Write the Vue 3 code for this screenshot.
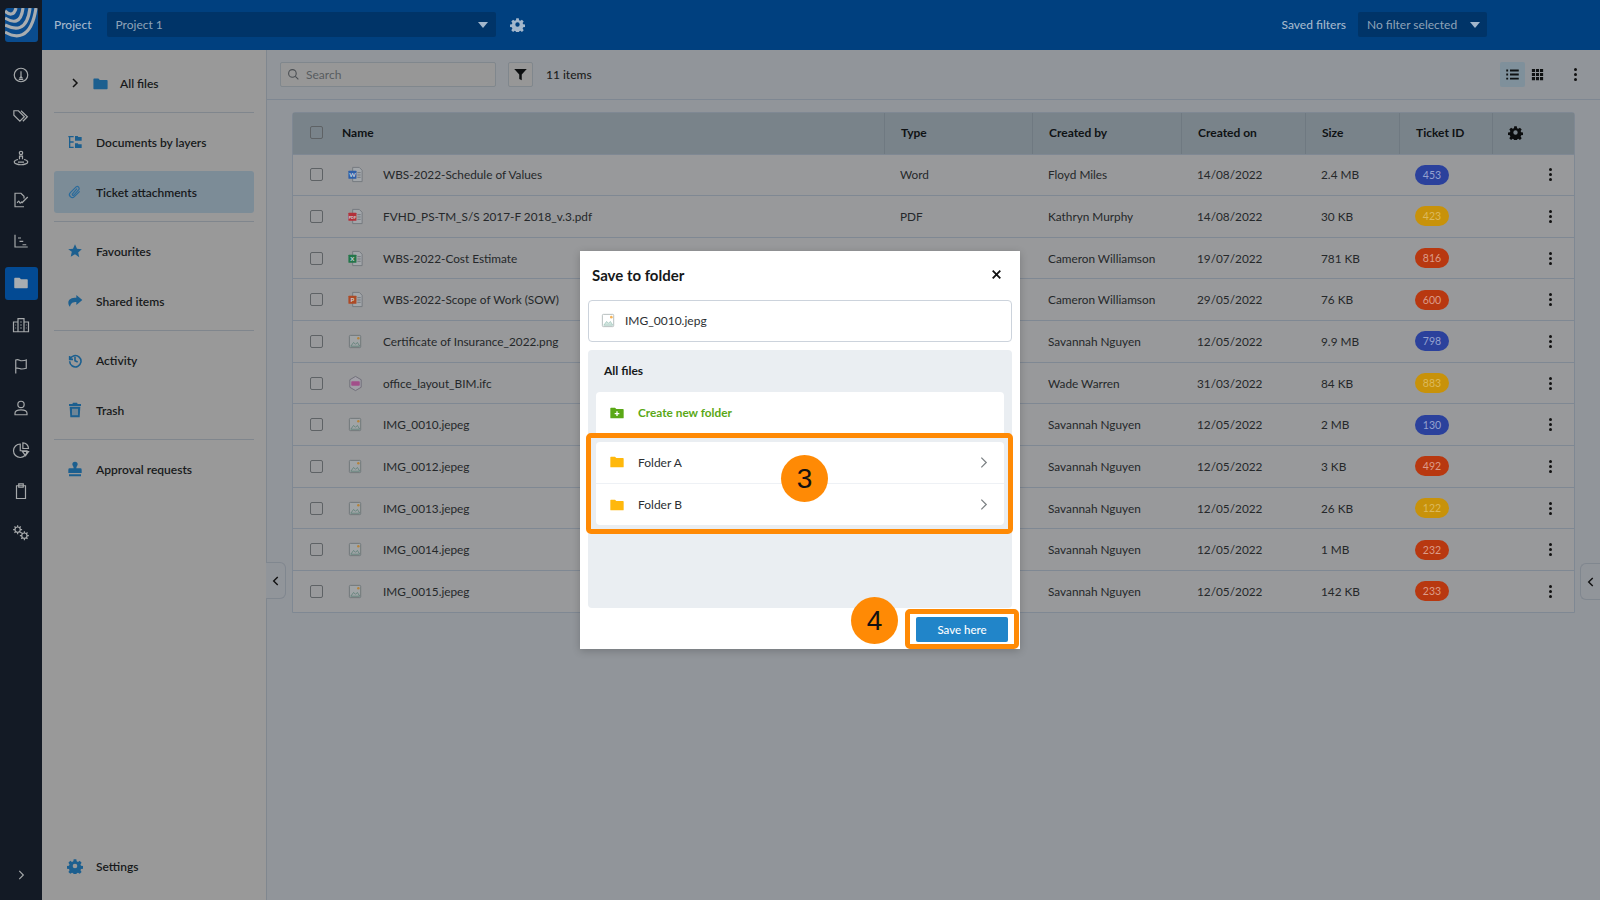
<script setup>
const railIcons = [
  { d: 'M12 3a9 9 0 100 18 9 9 0 000-18zM12 7v7M7.500 10h.01M16.500 10h.01M9 18h6M12 14l-1.500 2h3z' },
  { d: 'M2.500 5v6l8 8 6-6-8-8zM6.500 8.500h.01M12 5l8.500 8-6 6' },
  { d: 'M12 3a2.200 2.200 0 110 4.400A2.200 2.200 0 0112 3zM10 13.500V9.500h4v4M8 14c-3 .7-5 2-5 3.200 0 2 4 3.800 9 3.800s9-1.800 9-3.800c0-1.200-2-2.500-5-3.200M8 17.500h8' },
  { d: 'M16 21H4V3h8l4 4v3M7 16c1-3 2-3 3-1s2 1 3-1M13 16l8-8' },
  { d: 'M4 3.500V20h17M8 8h4M10 12.500h5M14 17h5' },
  { d: 'M3 6a1 1 0 011-1h6l2 2h8a1 1 0 011 1v10a1 1 0 01-1 1H4a1 1 0 01-1-1z', fill: true },
  { d: 'M2 8h6v13H2zM8 3.500h8V21H8zM16 8h6v13h-6zM4.500 12h1M4.500 16h1M11 8h2M11 12h2M11 16h2M18.500 12h1M18.500 16h1' },
  { d: 'M5 22V4c4-1.500 5 1 8 1 2 0 4 0 6-1v11c-3 1-4 1-6 1-3 0-4-2-8-1' },
  { d: 'M12 3a4.200 4.200 0 110 8.400A4.200 4.200 0 0112 3zM4 21v-2c0-3 3-4.500 8-4.500s8 1.500 8 4.500v2z' },
  { d: 'M11 4a9 9 0 109 9h-9zM14.500 2.500V10H22a7.500 7.500 0 00-7.500-7.500zM14 14h8l-4 5.500z' },
  { d: 'M6 5h12v17H6zM9 2.500h6V7H9z' },
  { d: 'M7.500 4a3.500 3.500 0 110 7 3.500 3.500 0 010-7zM7.500 1.500V4M7.500 11v2.500M1.500 7.500H4M11 7.500h2.500M3.300 3.300L5 5M10 10l1.700 1.700M11.700 3.300L10 5M5 10l-1.700 1.700M16.500 12a3.500 3.500 0 110 7 3.500 3.500 0 010-7zM16.500 9.500V12M16.500 19v2.500M10.500 15.500H13M20 15.500h2.500M12.300 11.300L14 13M19 18l1.700 1.700M20.700 11.300L19 13M14 18l-1.700 1.700' },
]

const rows = [
  ['WBS-2022-Schedule of Values', 'Word', 'Floyd Miles', '14/08/2022', '2.4 MB', 453, 'blue', 'word'],
  ['FVHD_PS-TM_S/S 2017-F 2018_v.3.pdf', 'PDF', 'Kathryn Murphy', '14/08/2022', '30 KB', 423, 'yellow', 'pdf'],
  ['WBS-2022-Cost Estimate', 'Excel', 'Cameron Williamson', '19/07/2022', '781 KB', 816, 'red', 'xls'],
  ['WBS-2022-Scope of Work (SOW)', 'PowerPoint', 'Cameron Williamson', '29/05/2022', '76 KB', 600, 'red', 'ppt'],
  ['Certificate of Insurance_2022.png', 'Image', 'Savannah Nguyen', '12/05/2022', '9.9 MB', 798, 'blue', 'img'],
  ['office_layout_BIM.ifc', 'BIM', 'Wade Warren', '31/03/2022', '84 KB', 883, 'yellow', 'bim'],
  ['IMG_0010.jepeg', 'Image', 'Savannah Nguyen', '12/05/2022', '2 MB', 130, 'blue', 'img'],
  ['IMG_0012.jepeg', 'Image', 'Savannah Nguyen', '12/05/2022', '3 KB', 492, 'red', 'img'],
  ['IMG_0013.jepeg', 'Image', 'Savannah Nguyen', '12/05/2022', '26 KB', 122, 'yellow', 'img'],
  ['IMG_0014.jepeg', 'Image', 'Savannah Nguyen', '12/05/2022', '1 MB', 232, 'red', 'img'],
  ['IMG_0015.jepeg', 'Image', 'Savannah Nguyen', '12/05/2022', '142 KB', 233, 'red', 'img'],
].map(([name, type, by, on, size, id, tone, kind]) => ({ name, type, by, on, size, id, tone, kind }))

const docTag = { word: ['#2f5fa8', 'W'], pdf: ['#b3303a', 'PDF'], xls: ['#23764a', 'X'], ppt: ['#ad4a26', 'P'] }
</script>

<template>
  <div class="app">
    <aside class="rail">
      <svg class="logo" viewBox="0 0 33 34">
        <rect width="33" height="34" rx="3" fill="#0a4c8e" />
        <g fill="none" stroke="#a9adb0" stroke-width="3.200">
          <path d="M0 24C10 30 26 33 31 0" />
          <path d="M0 17C10 22 22 24 25 0" />
          <path d="M0 10C8 15 16 16 18 0" />
          <path d="M0 3C4 7 9 8 11 0" />
        </g>
      </svg>
      <div v-for="(icon, i) in railIcons" :key="i" class="rail-item">
        <div class="rail-tile" :class="{ on: icon.fill }">
          <svg viewBox="0 0 24 24" class="rail-icon" :class="{ solid: icon.fill }"><path :d="icon.d" /></svg>
        </div>
      </div>
      <svg class="rail-more" viewBox="0 0 24 24"><path d="M9 5l7 7-7 7" /></svg>
    </aside>

    <div class="shell">
      <header class="topbar">
        <span class="top-label">Project</span>
        <div class="top-select project"><span>Project 1</span><i class="caret"></i></div>
        <svg class="top-gear" viewBox="0 0 24 24"><path fill-rule="evenodd" d="M10 2h4l.5 3 2 .9 2.600-1.700 2.800 2.800-1.700 2.600.8 2 3 .4v4l-3 .5-.8 2 1.700 2.500-2.800 2.800-2.600-1.700-2 .9-.5 3h-4l-.5-3-2-.9-2.600 1.700-2.800-2.800 1.700-2.500-.8-2-3-.5v-4l3-.4.8-2L2.100 7l2.800-2.800 2.600 1.700 2-.9zM12 8.500a3.500 3.500 0 100 7 3.500 3.500 0 000-7z" /></svg>
        <span class="top-label saved">Saved filters</span>
        <div class="top-select filter"><span>No filter selected</span><i class="caret"></i></div>
      </header>

      <div class="body">
        <nav class="side">
          <div class="nav-item all">
            <svg class="chev" viewBox="0 0 24 24"><path d="M8 4l8 8-8 8" /></svg>
            <svg class="nav-icon" viewBox="0 0 24 24"><path d="M2 6a1 1 0 011-1h6l2 2h10a1 1 0 011 1v11a1 1 0 01-1 1H3a1 1 0 01-1-1z" /></svg>
            <span>All files</span>
          </div>
          <hr />
          <div class="nav-item">
            <svg class="nav-icon" viewBox="0 0 24 24"><path d="M2 3h8v2H5v6h5v2H5v6h5v2H3V5H2zM12 3h4l1 1.500h5V10H12zM12 14h4l1 1.500h5V21H12z" /></svg>
            <span>Documents by layers</span>
          </div>
          <div class="nav-item active">
            <svg class="nav-line" viewBox="0 0 24 24"><path d="M19 11l-8 8a4 4 0 01-6-6l9-9a3 3 0 014 4l-8 9a1.500 1.500 0 01-2-2l7-8" /></svg>
            <span>Ticket attachments</span>
          </div>
          <hr />
          <div class="nav-item">
            <svg class="nav-icon" viewBox="0 0 24 24"><path d="M12 2l3 6.800 7.200.7-5.400 4.800 1.600 7.200L12 17l-6.400 3.500 1.600-7.200L1.800 9.500 9 8.800z" /></svg>
            <span>Favourites</span>
          </div>
          <div class="nav-item">
            <svg class="nav-icon" viewBox="0 0 24 24"><path d="M14 3l9 7.500-9 7.500v-4.500c-5 0-8 1-9.500 7C3 19 2 17 2 14.500 2 9 7 7 14 7z" /></svg>
            <span>Shared items</span>
          </div>
          <hr />
          <div class="nav-item">
            <svg class="nav-line thick" viewBox="0 0 24 24"><path d="M4 6v5h5M4.500 11A8.500 8.500 0 114 14M12 7v6l4 2" /></svg>
            <span>Activity</span>
          </div>
          <div class="nav-item">
            <svg class="nav-icon" viewBox="0 0 24 24"><path fill-rule="evenodd" d="M9 1h6l1 2h5v3H3V3h5zM4 7h16l-1 16H5zM8 10v10h2V10zm3 0v10h2V10zm3 0v10h2V10z" /></svg>
            <span>Trash</span>
          </div>
          <hr />
          <div class="nav-item">
            <svg class="nav-icon" viewBox="0 0 24 24"><path d="M12 1a4 4 0 014 4c0 2-2 3-2 6h6a2 2 0 012 2v5H2v-5a2 2 0 012-2h6c0-3-2-4-2-6a4 4 0 014-4zM3 20h18v3H3z" /></svg>
            <span>Approval requests</span>
          </div>
          <div class="nav-item settings">
            <svg class="nav-icon" viewBox="0 0 24 24"><path fill-rule="evenodd" d="M10 2h4l.5 3 2 .9 2.600-1.700 2.800 2.800-1.700 2.600.8 2 3 .4v4l-3 .5-.8 2 1.700 2.500-2.800 2.800-2.600-1.700-2 .9-.5 3h-4l-.5-3-2-.9-2.600 1.700-2.800-2.800 1.700-2.500-.8-2-3-.5v-4l3-.4.8-2L2.100 7l2.800-2.800 2.600 1.700 2-.9zM12 8.500a3.500 3.500 0 100 7 3.500 3.500 0 000-7z" /></svg>
            <span>Settings</span>
          </div>
          <div class="tab tab-left"><svg viewBox="0 0 24 24"><path d="M15 5l-7 7 7 7" /></svg></div>
        </nav>

        <main class="main">
          <div class="toolbar">
            <div class="search">
              <svg viewBox="0 0 24 24"><path d="M10 3a7 7 0 110 14 7 7 0 010-14zM15 15l6 6" /></svg>
              <span>Search</span>
            </div>
            <div class="filter-btn">
              <svg viewBox="0 0 24 24"><path d="M2 3h20l-8 9v9l-4-2v-7z" /></svg>
            </div>
            <span class="count">11 items</span>
            <div class="views">
              <div class="view on">
                <svg viewBox="0 0 24 24"><path d="M2 4h3v3H2zM8 4h14v3H8zM2 10.500h3v3H2zM8 10.500h14v3H8zM2 17h3v3H2zM8 17h14v3H8z" /></svg>
              </div>
              <div class="view">
                <svg viewBox="0 0 24 24"><path d="M3 3h5v5H3zM9.500 3h5v5h-5zM16 3h5v5h-5zM3 9.500h5v5H3zM9.500 9.500h5v5h-5zM16 9.500h5v5h-5zM3 16h5v5H3zM9.500 16h5v5h-5zM16 16h5v5h-5z" /></svg>
              </div>
              <div class="kebab top"><i></i><i></i><i></i></div>
            </div>
          </div>

          <section class="table">
            <div class="row head">
              <div class="cell name-cell"><span class="check"></span><span class="head-name">Name</span></div>
              <div class="cell">Type</div>
              <div class="cell">Created by</div>
              <div class="cell">Created on</div>
              <div class="cell">Size</div>
              <div class="cell">Ticket ID</div>
              <div class="cell gear-cell">
                <svg viewBox="0 0 24 24"><path fill-rule="evenodd" d="M10 2h4l.5 3 2 .9 2.600-1.700 2.800 2.800-1.700 2.600.8 2 3 .4v4l-3 .5-.8 2 1.700 2.500-2.800 2.800-2.600-1.700-2 .9-.5 3h-4l-.5-3-2-.9-2.600 1.700-2.800-2.800 1.700-2.500-.8-2-3-.5v-4l3-.4.8-2L2.100 7l2.800-2.800 2.600 1.700 2-.9zM12 8.500a3.500 3.500 0 100 7 3.500 3.500 0 000-7z" /></svg>
              </div>
            </div>
            <div v-for="r in rows" :key="r.name" class="row">
              <div class="cell name-cell">
                <span class="check"></span>
                <svg class="file" viewBox="0 0 18 18">
                  <template v-if="docTag[r.kind]">
                    <path d="M6 1.500h7l3 3v12H6z" fill="#a2a6aa" stroke="#74797e" />
                    <path d="M11 7h3.500M11 9.500h3.500M11 12h3.500" stroke="#74797e" />
                    <rect x="1.500" y="5" width="8.500" height="8.500" rx=".6" :fill="docTag[r.kind][0]" />
                    <text x="5.700" y="11.600" text-anchor="middle" class="file-tag" :class="{ small: r.kind === 'pdf' }">{{ docTag[r.kind][1] }}</text>
                  </template>
                  <template v-else-if="r.kind === 'img'">
                    <rect x="2.500" y="2.500" width="12" height="13" rx="1" fill="#a0a4a6" stroke="#6f7678" />
                    <path d="M4 14l3-4 2 2 2-2 2.500 4z" fill="none" stroke="#5f8178" stroke-width=".9" />
                    <circle cx="12" cy="5.500" r="1.300" fill="#b5823a" />
                  </template>
                  <template v-else>
                    <path d="M9 1.500l6 3.500v8l-6 3.500L3 13V5z" fill="#a2a0a8" stroke="#6f6d78" />
                    <rect x="4.500" y="6.500" width="9" height="5" rx=".8" fill="#a24f8a" />
                  </template>
                </svg>
                <span>{{ r.name }}</span>
              </div>
              <div class="cell">{{ r.type }}</div>
              <div class="cell">{{ r.by }}</div>
              <div class="cell">{{ r.on }}</div>
              <div class="cell">{{ r.size }}</div>
              <div class="cell"><span class="badge" :class="r.tone">{{ r.id }}</span></div>
              <div class="cell actions"><div class="kebab"><i></i><i></i><i></i></div></div>
            </div>
          </section>
          <div class="tab tab-right"><svg viewBox="0 0 24 24"><path d="M15 5l-7 7 7 7" /></svg></div>
        </main>
      </div>
    </div>

    <div class="backdrop">
      <div class="modal">
        <div class="modal-head">
          <h2>Save to folder</h2>
          <svg class="close" viewBox="0 0 24 24"><path d="M5 5l14 14M19 5L5 19" /></svg>
        </div>
        <div class="file-box">
          <svg class="file" viewBox="0 0 18 18">
            <rect x="2.500" y="2.500" width="12" height="13" rx="1" fill="#fff" stroke="#b4bcbc" />
            <path d="M4 14l3-4 2 2 2-2 2.500 4z" fill="#d4e6e0" stroke="#9fc6bb" stroke-width=".8" />
            <circle cx="12" cy="5.500" r="1.400" fill="#f5b45a" />
          </svg>
          <span>IMG_0010.jepg</span>
        </div>
        <div class="panel">
          <div class="panel-title">All files</div>
          <div class="folder-row create">
            <svg class="folder-icon" viewBox="0 0 24 24">
              <path d="M2 5a1 1 0 011-1h6l2 2h10a1 1 0 011 1v12a1 1 0 01-1 1H3a1 1 0 01-1-1z" fill="#5aa816" />
              <path d="M12 9.500v7M8.500 13h7" stroke="#fff" stroke-width="2" />
            </svg>
            <span>Create new folder</span>
          </div>
          <div class="folder-list">
            <div v-for="f in ['Folder A', 'Folder B']" :key="f" class="folder-row">
              <svg class="folder-icon" viewBox="0 0 24 24">
                <path d="M2 5a1 1 0 011-1h6l2 2h10a1 1 0 011 1v12a1 1 0 01-1 1H3a1 1 0 01-1-1z" fill="#ffb80c" />
              </svg>
              <span>{{ f }}</span>
              <svg class="row-chev" viewBox="0 0 24 24"><path d="M8 3l9 9-9 9" /></svg>
            </div>
          </div>
        </div>
        <div class="modal-foot"><button class="save">Save here</button></div>

        <div class="mark box-three"></div>
        <div class="mark box-four"></div>
        <div class="step step-three">3</div>
        <div class="step step-four">4</div>
      </div>
    </div>
  </div>
</template>

<style>
html, body { margin: 0; }
</style>

<style scoped>
.app {
  position: relative;
  display: flex;
  height: 900px;
  overflow: hidden;
  font-family: Lato, "Liberation Sans", sans-serif;
  font-size: 12px;
  color: #1c1e20;
  background: #999;
}
.rail {
  width: 42px;
  flex: none;
  display: flex;
  flex-direction: column;
  align-items: center;
  background: #131a25;
  box-sizing: border-box;
  padding-top: 8px;
}
.logo { width: 33px; height: 34px; margin-bottom: 12px; flex: none; }
.rail-item { height: 41.67px; display: flex; align-items: center; justify-content: center; flex: none; }
.rail-tile { width: 33px; height: 33px; border-radius: 3px; display: flex; align-items: center; justify-content: center; }
.rail-tile.on { background: #034a93; }
.rail-icon { width: 18px; height: 18px; fill: none; stroke: #a6a9ab; stroke-width: 1.600; }
.rail-icon.solid { fill: #a9adb1; stroke: none; }
.rail-more { width: 14px; height: 14px; margin-top: auto; margin-bottom: 18px; fill: none; stroke: #a6a9ab; stroke-width: 2; }

.shell { flex: 1; min-width: 0; display: flex; flex-direction: column; }
.topbar {
  height: 50px;
  flex: none;
  box-sizing: border-box;
  display: flex;
  align-items: center;
  background: #00407f;
  color: #a3b7cc;
  padding: 0 0 1px 12px;
}
.top-label { font-weight: 500; }
.top-select {
  height: 25px;
  display: flex;
  align-items: center;
  justify-content: space-between;
  background: #003468;
  border-radius: 2px;
  box-sizing: border-box;
  padding: 0 8px 0 9px;
  color: #8fa3b8;
}
.project { width: 389px; margin-left: 15px; }
.filter { width: 129px; margin-left: 12px; padding-right: 7px; margin-right: 113px; }
.caret { width: 0; height: 0; border: 5px solid transparent; border-top: 6px solid #a3b7cc; border-bottom: 0; }
.top-gear { width: 15px; height: 15px; margin-left: 14px; fill: #a3b7cc; }
.saved { margin-left: auto; }

.body { flex: 1; min-height: 0; display: flex; }
.side {
  position: relative;
  width: 225px;
  flex: none;
  box-sizing: border-box;
  border-right: 1px solid #80878f;
  padding: 12px 12px 13px;
  display: flex;
  flex-direction: column;
  gap: 8px;
  background: #999;
}
.side hr { width: 100%; height: 1px; margin: 0; border: 0; background: #80868d; }
.nav-item {
  height: 42px;
  flex: none;
  display: flex;
  align-items: center;
  gap: 13px;
  padding-left: 13px;
  border-radius: 3px;
  font-weight: 600;
  color: #17191b;
}
.nav-item.active { background: #7c8c97; }
.nav-item.all { gap: 11px; padding-left: 15px; }
.nav-item.settings { margin-top: auto; }
.nav-icon { width: 16px; height: 16px; flex: none; fill: #1c5f8f; }
.nav-line { width: 16px; height: 16px; flex: none; fill: none; stroke: #2a6b9c; stroke-width: 1.800; }
.nav-line.thick { stroke-width: 2.400; stroke: #1c5f8f; }
.chev { width: 12px; height: 12px; flex: none; fill: none; stroke: #111; stroke-width: 3; }
.all .nav-icon { width: 17px; height: 17px; }

.main { position: relative; flex: 1; min-width: 0; background: #91959a; }
.toolbar {
  height: 50px;
  box-sizing: border-box;
  border-bottom: 1px solid #7e8792;
  display: flex;
  align-items: center;
  padding: 0 23px 0 13px;
}
.search {
  width: 216px;
  height: 25px;
  box-sizing: border-box;
  border: 1px solid #80878d;
  border-radius: 2px;
  background: #979797;
  display: flex;
  align-items: center;
  gap: 6px;
  padding-left: 6px;
  color: #585c60;
}
.search svg { width: 13px; height: 13px; fill: none; stroke: #4a4e52; stroke-width: 2; }
.filter-btn {
  width: 25px;
  height: 25px;
  margin-left: 12px;
  box-sizing: border-box;
  border: 1px solid #80878d;
  border-radius: 2px;
  background: #979797;
  display: flex;
  align-items: center;
  justify-content: center;
}
.filter-btn svg { width: 15px; height: 15px; fill: #0d0f10; }
.count { margin-left: 13px; font-weight: 500; }
.views { margin-left: auto; display: flex; align-items: center; gap: 0; }
.view { width: 25px; height: 25px; border-radius: 2px; display: flex; align-items: center; justify-content: center; }
.view.on { background: #7f909b; }
.view svg { width: 15px; height: 15px; fill: #0f1112; }
.kebab { display: flex; flex-direction: column; gap: 2px; align-items: center; }
.kebab i { width: 3px; height: 3px; border-radius: 50%; background: #111; }
.kebab.top { margin-left: 24px; }

.table {
  margin: 12px 25px 0;
  border: 1px solid #7f8893;
  border-radius: 3px 3px 0 0;
  background: #98999b;
  box-sizing: border-box;
  width: 1283px;
}
.row {
  display: grid;
  grid-template-columns: 591px 148px 149px 124px 94px 93px 1fr;
  height: 41.67px;
  box-sizing: border-box;
  border-top: 1px solid #7f8893;
  align-items: center;
  font-size: 11.8px;
  color: #25282a;
}
.row.head {
  height: 40.5px;
  border-top: 0;
  background: #79838a;
  font-size: 12px;
  font-weight: 700;
  color: #0f1214;
  align-items: stretch;
}
.cell { padding-left: 16px; display: flex; align-items: center; height: 100%; box-sizing: border-box; min-width: 0; }
.head .cell + .cell { border-left: 1px solid #6f7981; }
.head .cell { padding-bottom: 1px; }
.name-cell { padding-left: 17px; }
.check { width: 11px; height: 11px; flex: none; border: 1.500px solid #5e6265; border-radius: 2px; }
.head-name { margin-left: 19px; }
.file { width: 17px; height: 17px; flex: none; margin: 0 19px 0 24px; }
.file-tag { font-size: 6.500px; font-weight: 700; fill: #c9d2dc; }
.file-tag.small { font-size: 4px; }
.gear-cell svg { width: 15px; height: 15px; fill: #0b0d0e; }
.gear-cell { padding-left: 15px; }
.actions { justify-content: flex-end; padding-right: 22px; }
.badge {
  width: 34px;
  height: 20px;
  border-radius: 10px;
  display: flex;
  align-items: center;
  justify-content: center;
  font-size: 10.5px;
}
.badge.blue { background: #2b419c; color: #95a2cf; }
.badge.yellow { background: #c8920a; color: #dcb95c; }
.badge.red { background: #b83810; color: #dc9c88; }

.tab {
  position: absolute;
  z-index: 2;
  width: 20px;
  height: 37px;
  box-sizing: border-box;
  border: 1px solid #80878f;
  display: flex;
  align-items: center;
  justify-content: center;
  background: #91959a;
}
.tab svg { width: 14px; height: 14px; fill: none; stroke: #111; stroke-width: 2.400; }
.tab-left { left: 224px; top: 512px; border-radius: 0 6px 6px 0; border-left: 0; }
.tab-right { right: 0; top: 513px; border-radius: 6px 0 0 6px; border-right: 0; }

.backdrop {
  position: absolute;
  z-index: 3;
  inset: 0;
  display: flex;
  align-items: center;
  justify-content: center;
}
.modal {
  position: relative;
  width: 440px;
  height: 398px;
  box-sizing: border-box;
  padding: 0 8px;
  background: #fff;
  display: flex;
  flex-direction: column;
  box-shadow: 0 2px 8px rgba(0, 0, 0, .2);
}
.modal-head { height: 49px; flex: none; display: flex; align-items: center; justify-content: space-between; padding: 0 9px 2px 4px; box-sizing: border-box; }
.modal-head h2 { margin: 0; font-size: 15px; font-weight: 700; color: #16181a; }
.close { width: 13px; height: 13px; fill: none; stroke: #111; stroke-width: 3.400; }
.file-box {
  height: 42px;
  flex: none;
  box-sizing: border-box;
  border: 1px solid #ccd3dc;
  border-radius: 4px;
  padding-bottom: 1px;
  display: flex;
  align-items: center;
  color: #2c2f33;
}
.file-box .file { margin: 0 8px 0 11px; }
.panel {
  margin-top: 8px;
  height: 258px;
  flex: none;
  box-sizing: border-box;
  padding: 0 8px;
  background: #eaeef2;
  border-radius: 4px;
}
.panel-title { height: 41px; display: flex; align-items: center; padding-left: 8px; font-weight: 700; color: #16181a; }
.folder-row {
  height: 41.67px;
  box-sizing: border-box;
  background: #fff;
  display: flex;
  align-items: center;
  gap: 13px;
  padding: 0 14px 0 13px;
  color: #2c2f33;
}
.folder-row.create { margin-top: 1px; border-radius: 4px 4px 0 0; color: #5aa816; font-weight: 700; font-size: 11.8px; }
.folder-list { margin-top: 8px; border-radius: 4px; overflow: hidden; }
.folder-list .folder-row + .folder-row { border-top: 1px solid #eef1f5; }
.folder-icon { width: 16px; height: 16px; flex: none; }
.row-chev { width: 13px; height: 13px; margin-left: auto; fill: none; stroke: #7d8285; stroke-width: 2.400; }
.modal-foot { flex: 1; display: flex; align-items: center; justify-content: flex-end; padding: 2px 4px 0 0; }
.save {
  width: 92px;
  height: 25px;
  border: 0;
  border-radius: 2px;
  background: #2185c9;
  color: #fff;
  font: 500 11.500px Lato, "Liberation Sans", sans-serif;
}
.mark { position: absolute; box-sizing: border-box; border: 5px solid #ff8a05; border-radius: 5px; }
.box-three { left: 6px; top: 182px; width: 427px; height: 101px; }
.box-four { left: 325px; top: 358px; width: 114px; height: 40px; }
.step {
  position: absolute;
  width: 47px;
  height: 47px;
  border-radius: 50%;
  background: #ff8a05;
  display: flex;
  align-items: center;
  justify-content: center;
  font: 28px "Liberation Sans", sans-serif;
  color: #111;
}
.step-three { left: 201px; top: 204px; }
.step-four { left: 271px; top: 346px; }
</style>
